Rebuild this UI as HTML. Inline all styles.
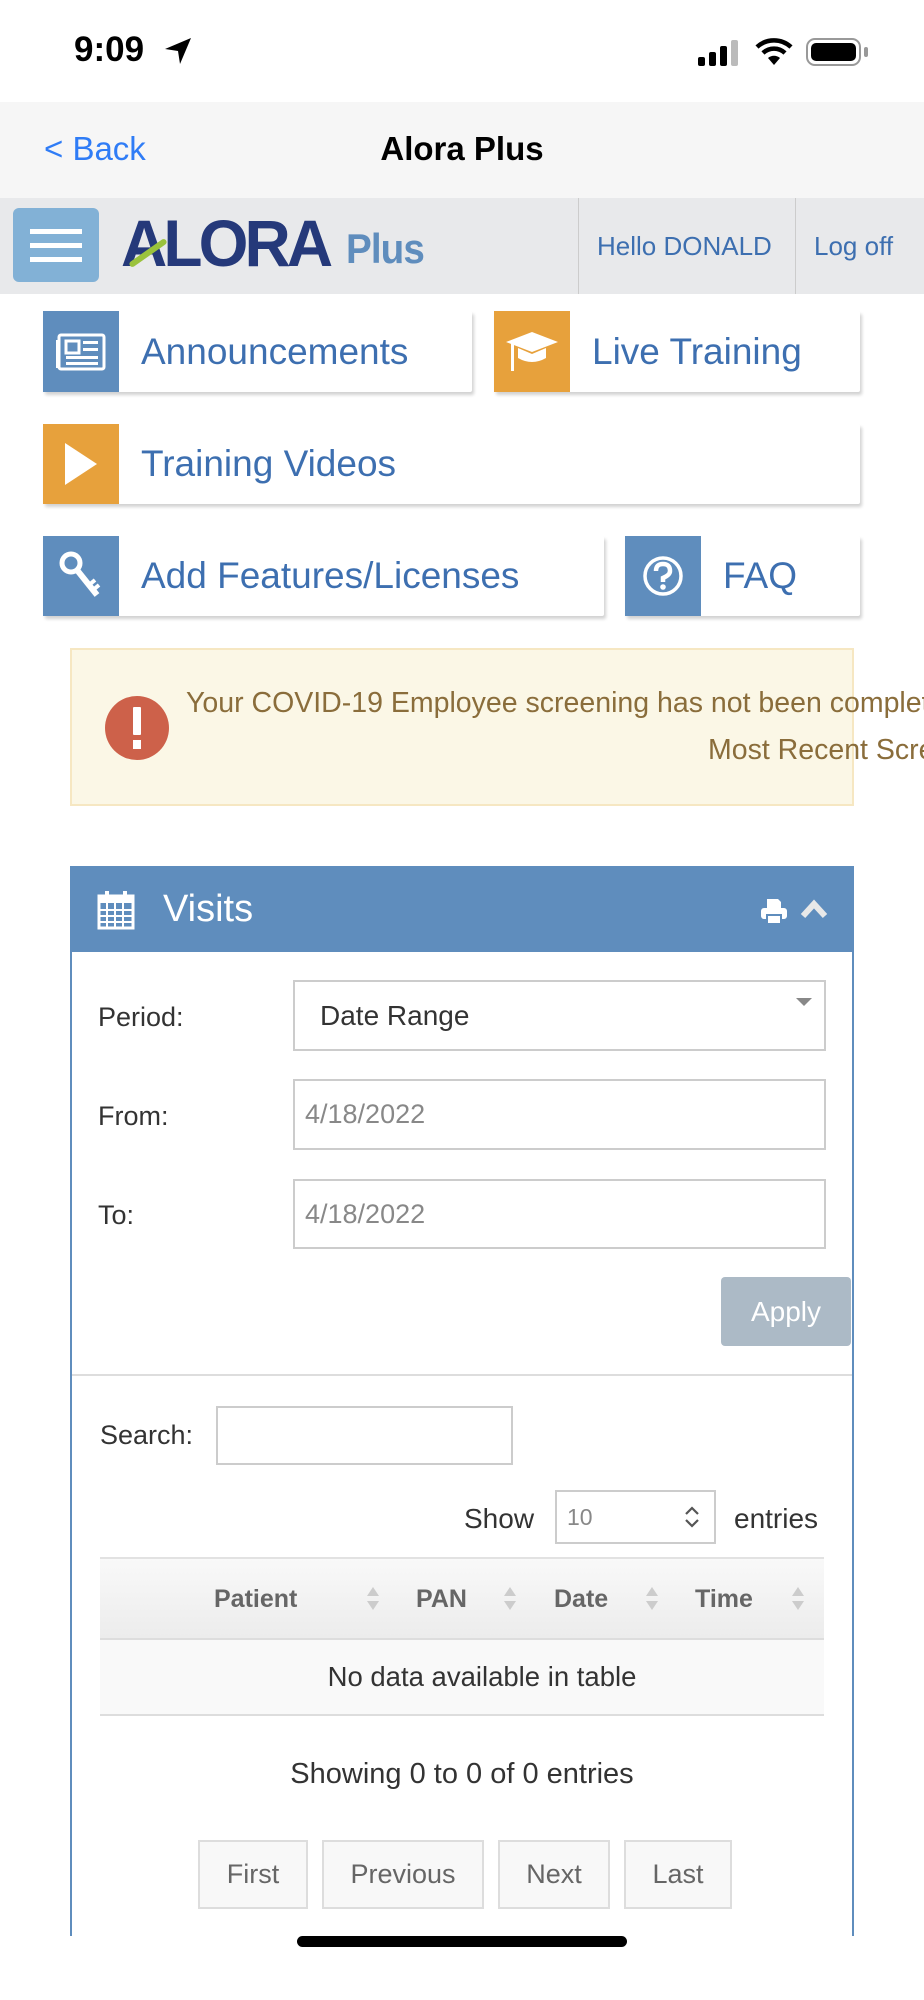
<!DOCTYPE html>
<html><head><meta charset="utf-8"><style>
*{margin:0;padding:0;box-sizing:border-box}
body{width:924px;height:2000px;background:#fff;font-family:"Liberation Sans",sans-serif;position:relative;overflow:hidden}
.a{position:absolute;white-space:nowrap}
.btn{position:absolute;background:#fff;box-shadow:2px 3px 3px rgba(0,0,0,.18);border-radius:2px}
.btn .ic{position:absolute;left:0;top:0;bottom:0;width:76px;display:flex;align-items:center;justify-content:center}
.btn .t{position:absolute;left:98px;top:0;bottom:0;display:flex;align-items:center;font-size:37px;color:#3d6fb0}
.blue{background:#5f8dbd}.org{background:#e7a13c}
.inp{position:absolute;border:2px solid #ccc;background:#fff;font-size:27px;color:#888;display:flex;align-items:center;padding-left:10px}
.pg{position:absolute;top:1840px;height:69px;border:2px solid #ddd;background:#f8f8f8;color:#666;font-size:27px;display:flex;align-items:center;justify-content:center}
.th{position:absolute;top:1585px;font-size:25px;font-weight:bold;color:#666}
.sa{position:absolute;top:1584px;width:14px}
</style></head><body>
<!-- status bar -->
<div class="a" style="left:74px;top:30px;font-size:35px;font-weight:bold;color:#000">9:09</div>
<svg class="a" style="left:163px;top:36px" width="30" height="30" viewBox="0 0 30 30"><path d="M28 2 L2 13 L15 15 L17 28 Z" fill="#000"/></svg>
<svg class="a" style="left:698px;top:40px" width="42" height="26"><rect x="0" y="17" width="7" height="9" rx="2"/><rect x="11" y="12" width="7" height="14" rx="2"/><rect x="22" y="6" width="7" height="20" rx="2"/><rect x="33" y="0" width="7" height="26" rx="2" fill="#bbb"/></svg>
<svg class="a" style="left:755px;top:38px" width="38" height="28" viewBox="0 0 38 28"><path d="M19 27 L13 20 A9 9 0 0 1 25 20 Z" /><path d="M8 15 A16 16 0 0 1 30 15" stroke="#000" stroke-width="4.5" fill="none"/><path d="M2 9 A25 25 0 0 1 36 9" stroke="#000" stroke-width="4.5" fill="none"/></svg>
<div class="a" style="left:806px;top:38px;width:55px;height:28px;border:2.5px solid #999;border-radius:9px;padding:3px"><div style="width:100%;height:100%;background:#000;border-radius:5px"></div></div>
<div class="a" style="left:864px;top:47px;width:4px;height:10px;background:#999;border-radius:2px"></div>
<!-- nav -->
<div class="a" style="left:0;top:102px;width:924px;height:96px;background:#f6f6f6"></div>
<div class="a" style="left:44px;top:130px;font-size:33px;color:#2f7cf6">&lt; Back</div>
<div class="a" style="left:0;width:924px;text-align:center;top:130px;font-size:33px;font-weight:bold;color:#000">Alora Plus</div>
<!-- header -->
<div class="a" style="left:0;top:198px;width:924px;height:96px;background:#e8e9eb"></div>
<div class="a" style="left:13px;top:208px;width:86px;height:74px;background:#82b1d6;border-radius:6px"></div>
<div class="a" style="left:30px;top:229px;width:52px;height:5px;background:#fff"></div>
<div class="a" style="left:30px;top:243px;width:52px;height:5px;background:#fff"></div>
<div class="a" style="left:30px;top:257px;width:52px;height:5px;background:#fff"></div>
<div class="a" style="left:121px;top:208px;font-size:66px;line-height:70px;font-weight:bold;color:#25397a;letter-spacing:-4px;transform:scaleX(0.97);transform-origin:left">ALORA</div>
<div class="a" style="left:126px;top:250px;width:44px;height:6px;background:#9ac23c;transform:rotate(-35deg);border-radius:3px"></div>
<div class="a" style="left:346px;top:226px;font-size:42px;line-height:46px;font-weight:bold;color:#5f8dbd;letter-spacing:-1px;transform:scaleX(0.92);transform-origin:left">Plus</div>
<div class="a" style="left:578px;top:198px;width:1px;height:96px;background:#ccc"></div>
<div class="a" style="left:795px;top:198px;width:1px;height:96px;background:#ccc"></div>
<div class="a" style="left:597px;top:231px;font-size:26px;color:#3d6fb0">Hello DONALD</div>
<div class="a" style="left:814px;top:231px;font-size:26px;color:#3d6fb0">Log off</div>
<!-- buttons -->
<div class="btn" style="left:43px;top:311px;width:429px;height:81px"><div class="ic blue"><svg width="52" height="40" viewBox="0 0 52 40"><rect x="4" y="3" width="45" height="34" rx="2" fill="none" stroke="#fff" stroke-width="3"/><rect x="1" y="8" width="4" height="28" fill="#fff"/><rect x="11" y="9" width="13" height="12" fill="none" stroke="#fff" stroke-width="3"/><rect x="28" y="9" width="15" height="3" fill="#fff"/><rect x="28" y="16" width="15" height="3" fill="#fff"/><rect x="11" y="24" width="32" height="3" fill="#fff"/><rect x="11" y="30" width="32" height="3" fill="#fff"/></svg></div><div class="t">Announcements</div></div>
<div class="btn" style="left:494px;top:311px;width:366px;height:81px"><div class="ic org"><svg width="56" height="44" viewBox="0 0 56 44"><path d="M28 2 L54 12 L28 22 L2 12 Z" fill="#fff"/><path d="M14 18 L14 28 Q28 36 42 28 L42 18 L28 24 Z" fill="#fff"/><rect x="7" y="13" width="3" height="28" fill="#fff"/></svg></div><div class="t">Live Training</div></div>
<div class="btn" style="left:43px;top:424px;width:817px;height:80px"><div class="ic org"><svg width="40" height="46"><path d="M4 2 L36 23 L4 44 Z" fill="#fff"/></svg></div><div class="t">Training Videos</div></div>
<div class="btn" style="left:43px;top:536px;width:561px;height:80px"><div class="ic blue"><svg width="44" height="50" viewBox="0 0 44 50"><circle cx="12" cy="12" r="9" fill="none" stroke="#fff" stroke-width="5"/><path d="M18 19 L38 44" stroke="#fff" stroke-width="6"/><path d="M30 34 L36 29 M34 39 L40 34" stroke="#fff" stroke-width="4"/></svg></div><div class="t">Add Features/Licenses</div></div>
<div class="btn" style="left:625px;top:536px;width:235px;height:80px"><div class="ic blue"><svg width="42" height="42"><circle cx="21" cy="21" r="18" fill="none" stroke="#fff" stroke-width="3.5"/><path d="M14 16 Q14 9 21 9 Q28 9 28 16 Q28 20 21 23 L21 27" stroke="#fff" stroke-width="4.5" fill="none"/><circle cx="21" cy="32" r="2.8" fill="#fff"/></svg></div><div class="t" style="left:98px">FAQ</div></div>
<!-- alert -->
<div class="a" style="left:70px;top:648px;width:784px;height:158px;background:#fbf7e6;border:2px solid #f6e7c2"></div>
<div class="a" style="left:105px;top:696px;width:64px;height:64px;border-radius:50%;background:#cd614a"></div>
<div class="a" style="left:133px;top:707px;width:8px;height:28px;background:#fff;border-radius:1px"></div>
<div class="a" style="left:133px;top:740px;width:8px;height:9px;background:#fff"></div>
<div class="a" style="left:0;top:680px;width:924px;height:100px;overflow:hidden">
<div class="a" style="left:186px;top:7px;font-size:28.5px;color:#8a6d3b">Your COVID-19 Employee screening has not been completed</div>
<div class="a" style="left:708px;top:54px;font-size:28.5px;color:#8a6d3b">Most Recent Screening</div>
</div>
<!-- panel -->
<div class="a" style="left:70px;top:866px;width:784px;height:1070px;border:2px solid #5f8dbd;border-bottom:none"></div>
<div class="a" style="left:70px;top:866px;width:784px;height:86px;background:#5f8dbd"></div>
<svg class="a" style="left:97px;top:890px" width="38" height="40" viewBox="0 0 38 40"><rect x="2" y="6" width="34" height="32" fill="none" stroke="#fff" stroke-width="3"/><rect x="2" y="6" width="34" height="7" fill="#fff"/><rect x="8" y="1" width="4" height="9" fill="#fff"/><rect x="26" y="1" width="4" height="9" fill="#fff"/><path d="M10 13V38M18 13V38M26 13V38M2 20H36M2 26H36M2 32H36" stroke="#fff" stroke-width="2"/></svg>
<div class="a" style="left:163px;top:888px;font-size:38px;color:#fff">Visits</div>
<svg class="a" style="left:760px;top:897px" width="28" height="28" viewBox="0 0 28 28"><path d="M7 2 H18 L21 5 V11 H7 Z" fill="#fff"/><rect x="1" y="11" width="26" height="11" rx="3" fill="#fff"/><rect x="7" y="18" width="14" height="9" fill="#fff" stroke="#5f8dbd" stroke-width="2"/></svg>
<svg class="a" style="left:799px;top:898px" width="30" height="22"><path d="M4 18 L15 6 L26 18" stroke="#e8e8e8" stroke-width="6" fill="none"/></svg>
<div class="a" style="left:98px;top:1002px;font-size:27px;color:#333">Period:</div>
<div class="inp" style="left:293px;top:980px;width:533px;height:71px;color:#333;padding-left:25px;font-size:28px">Date Range</div>
<div class="a" style="left:796px;top:998px;border-left:8px solid transparent;border-right:8px solid transparent;border-top:8px solid #888"></div>
<div class="a" style="left:98px;top:1101px;font-size:27px;color:#333">From:</div>
<div class="inp" style="left:293px;top:1079px;width:533px;height:71px">4/18/2022</div>
<div class="a" style="left:98px;top:1200px;font-size:27px;color:#333">To:</div>
<div class="inp" style="left:293px;top:1179px;width:533px;height:70px">4/18/2022</div>
<div class="a" style="left:721px;top:1277px;width:130px;height:69px;background:#acbac6;border-radius:4px;color:#fff;font-size:28px;display:flex;align-items:center;justify-content:center">Apply</div>
<div class="a" style="left:72px;top:1374px;width:780px;height:2px;background:#ddd"></div>
<div class="a" style="left:100px;top:1420px;font-size:27px;color:#333">Search:</div>
<div class="inp" style="left:216px;top:1406px;width:297px;height:59px"></div>
<div class="a" style="left:464px;top:1503px;font-size:28px;color:#333">Show</div>
<div class="inp" style="left:555px;top:1490px;width:161px;height:54px;font-size:23px">10</div>
<svg class="a" style="left:684px;top:1506px" width="16" height="22"><path d="M2 8 L8 2 L14 8 M2 14 L8 20 L14 14" stroke="#555" stroke-width="2.2" fill="none"/></svg>
<div class="a" style="left:734px;top:1503px;font-size:28px;color:#333">entries</div>
<div class="a" style="left:100px;top:1557px;width:724px;height:83px;background:linear-gradient(#f9f9f9,#ececec);border-top:2px solid #e2e2e2;border-bottom:2px solid #ddd"></div>
<div class="th" style="left:214px">Patient</div><div class="th" style="left:416px">PAN</div><div class="th" style="left:554px">Date</div><div class="th" style="left:695px">Time</div>
<svg class="sa" style="left:366px" height="30" viewBox="0 0 14 30"><path d="M1 12 L7 3 L13 12Z M1 17 L7 26 L13 17Z" fill="#ccc"/></svg>
<svg class="sa" style="left:503px" height="30" viewBox="0 0 14 30"><path d="M1 12 L7 3 L13 12Z M1 17 L7 26 L13 17Z" fill="#ccc"/></svg>
<svg class="sa" style="left:645px" height="30" viewBox="0 0 14 30"><path d="M1 12 L7 3 L13 12Z M1 17 L7 26 L13 17Z" fill="#ccc"/></svg>
<svg class="sa" style="left:791px" height="30" viewBox="0 0 14 30"><path d="M1 12 L7 3 L13 12Z M1 17 L7 26 L13 17Z" fill="#ccc"/></svg>
<div class="a" style="left:100px;top:1640px;width:724px;height:76px;background:#f9f9f9;border-bottom:2px solid #ddd"></div>
<div class="a" style="left:100px;width:764px;text-align:center;top:1661px;font-size:27.5px;color:#333">No data available in table</div>
<div class="a" style="left:100px;width:724px;text-align:center;top:1758px;font-size:29px;color:#333">Showing 0 to 0 of 0 entries</div>
<div class="pg" style="left:198px;width:110px">First</div>
<div class="pg" style="left:322px;width:162px">Previous</div>
<div class="pg" style="left:498px;width:112px">Next</div>
<div class="pg" style="left:624px;width:108px">Last</div>
<div class="a" style="left:297px;top:1936px;width:330px;height:11px;background:#000;border-radius:6px"></div>
</body></html>
